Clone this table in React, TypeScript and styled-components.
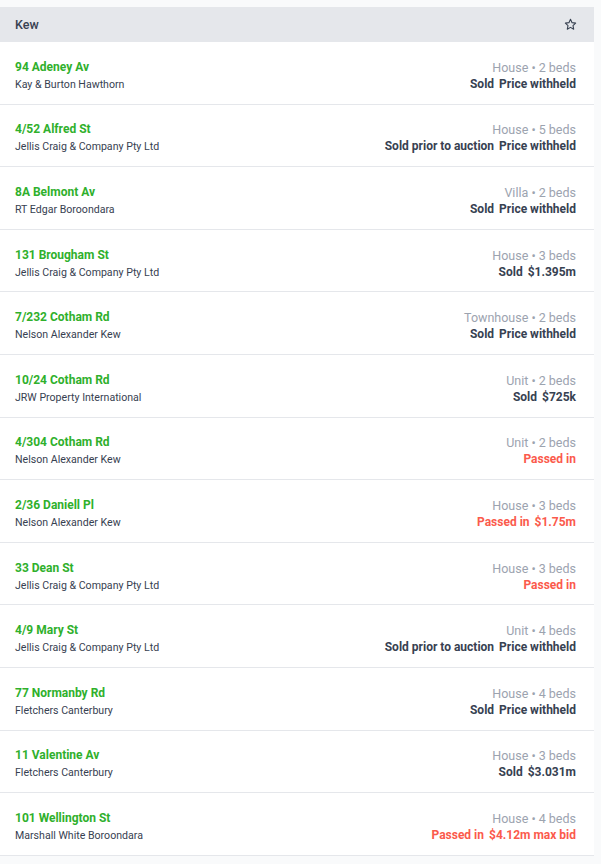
import React from 'react';
import styled, { createGlobalStyle } from 'styled-components';

const GlobalStyle = createGlobalStyle`
  body {
    margin: 0;
    background: #f9fafb;
    font-family: 'Roboto', 'Liberation Sans', sans-serif;
  }
`;

const Page = styled.div`
  padding-top: 7px;
`;

const Panel = styled.div`
  width: 594px;
  background: #ffffff;
`;

const Header = styled.div`
  display: flex;
  align-items: center;
  justify-content: space-between;
  height: 35px;
  padding: 0 17px 0 15px;
  background: #e5e7eb;
  box-sizing: border-box;
`;

const Title = styled.span`
  font-size: 12.5px;
  font-weight: 500;
  color: #374151;
`;

const StarButton = styled.button`
  display: flex;
  padding: 0;
  border: none;
  background: none;
  color: #374151;
`;

const Row = styled.div`
  display: flex;
  justify-content: space-between;
  align-items: center;
  height: 62.6px;
  padding: 6px 18px 0 15px;
  border-bottom: 1px solid #e5e7eb;
  box-sizing: border-box;
`;

const Col = styled.div<{ $right?: boolean }>`
  display: flex;
  flex-direction: column;
  gap: 2px;
  align-items: ${(p) => (p.$right ? 'flex-end' : 'flex-start')};
`;

const Address = styled.span`
  font-size: 12px;
  font-weight: 700;
  line-height: 15px;
  color: #2fb02c;
`;

const Agent = styled.span`
  font-size: 10.6px;
  line-height: 15px;
  color: #374151;
`;

const Meta = styled.span`
  font-size: 12.5px;
  line-height: 15px;
  color: #9ca3af;
`;

const Result = styled.span<{ $passed?: boolean }>`
  display: flex;
  gap: 5px;
  font-size: 12px;
  font-weight: 700;
  line-height: 15px;
  color: ${(p) => (p.$passed ? '#fb5a4c' : '#374151')};
`;

type Sale = {
  address: string;
  agent: string;
  type: string;
  beds: number;
  status: string;
  price?: string;
  passed?: boolean;
};

const sales: Sale[] = [
  { address: '94 Adeney Av', agent: 'Kay & Burton Hawthorn', type: 'House', beds: 2, status: 'Sold', price: 'Price withheld' },
  { address: '4/52 Alfred St', agent: 'Jellis Craig & Company Pty Ltd', type: 'House', beds: 5, status: 'Sold prior to auction', price: 'Price withheld' },
  { address: '8A Belmont Av', agent: 'RT Edgar Boroondara', type: 'Villa', beds: 2, status: 'Sold', price: 'Price withheld' },
  { address: '131 Brougham St', agent: 'Jellis Craig & Company Pty Ltd', type: 'House', beds: 3, status: 'Sold', price: '$1.395m' },
  { address: '7/232 Cotham Rd', agent: 'Nelson Alexander Kew', type: 'Townhouse', beds: 2, status: 'Sold', price: 'Price withheld' },
  { address: '10/24 Cotham Rd', agent: 'JRW Property International', type: 'Unit', beds: 2, status: 'Sold', price: '$725k' },
  { address: '4/304 Cotham Rd', agent: 'Nelson Alexander Kew', type: 'Unit', beds: 2, status: 'Passed in', passed: true },
  { address: '2/36 Daniell Pl', agent: 'Nelson Alexander Kew', type: 'House', beds: 3, status: 'Passed in', price: '$1.75m', passed: true },
  { address: '33 Dean St', agent: 'Jellis Craig & Company Pty Ltd', type: 'House', beds: 3, status: 'Passed in', passed: true },
  { address: '4/9 Mary St', agent: 'Jellis Craig & Company Pty Ltd', type: 'Unit', beds: 4, status: 'Sold prior to auction', price: 'Price withheld' },
  { address: '77 Normanby Rd', agent: 'Fletchers Canterbury', type: 'House', beds: 4, status: 'Sold', price: 'Price withheld' },
  { address: '11 Valentine Av', agent: 'Fletchers Canterbury', type: 'House', beds: 3, status: 'Sold', price: '$3.031m' },
  { address: '101 Wellington St', agent: 'Marshall White Boroondara', type: 'House', beds: 4, status: 'Passed in', price: '$4.12m max bid', passed: true },
];

const StarIcon = () => (
  <svg width="13" height="13" viewBox="0 0 24 24" fill="none" stroke="currentColor" strokeWidth="2" strokeLinejoin="round">
    <path d="M12 2.5l2.9 6.1 6.6.8-4.9 4.6 1.3 6.6L12 17.3l-5.9 3.3 1.3-6.6-4.9-4.6 6.6-.8z" />
  </svg>
);

const App: React.FC = () => (
  <>
    <GlobalStyle />
    <Page>
      <Panel>
        <Header>
          <Title>Kew</Title>
          <StarButton aria-label="Favourite">
            <StarIcon />
          </StarButton>
        </Header>
        {sales.map((s) => (
          <Row key={s.address}>
            <Col>
              <Address>{s.address}</Address>
              <Agent>{s.agent}</Agent>
            </Col>
            <Col $right>
              <Meta>
                {s.type} • {s.beds} beds
              </Meta>
              <Result $passed={s.passed}>
                <span>{s.status}</span>
                {s.price && <span>{s.price}</span>}
              </Result>
            </Col>
          </Row>
        ))}
      </Panel>
    </Page>
  </>
);

export default App;
